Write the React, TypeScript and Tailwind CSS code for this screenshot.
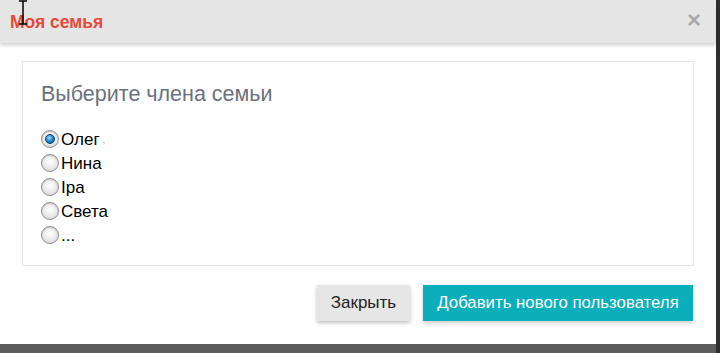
const members = ["Олег", "Нина", "Іра", "Света", "..."];

function Radio({ checked }: { checked: boolean }) {
  return (
    <span className="relative flex h-[18px] w-[18px] shrink-0 items-center justify-center rounded-full border border-[#8f8f8f] bg-[radial-gradient(circle_at_50%_40%,#ffffff_0%,#e8e8e8_55%,#cfcfcf_100%)] shadow-[inset_0_1px_1px_rgba(0,0,0,0.15)]">
      {checked && (
        <span className="h-[10px] w-[10px] rounded-full border border-[#0b3f6b] bg-[radial-gradient(circle_at_40%_35%,#9fdcff_0%,#2a8fd0_45%,#0a4b86_100%)]" />
      )}
    </span>
  );
}

export default function App() {
  return (
    <div className="relative flex h-[353px] w-[720px] overflow-hidden bg-[#5d5d5d] font-['Liberation_Sans',Arial,sans-serif]">
      <div className="flex h-[344px] w-[716px] flex-col bg-white">
        {/* Header */}
        <div className="relative z-10 flex h-[43px] items-center justify-between bg-[#e5e5e5] pl-[10px] pr-[15px] shadow-[0_2px_4px_rgba(0,0,0,0.2)]">
          <h4 className="pt-[2px] text-[17.5px] font-bold text-[#e7493a]">Моя семья</h4>
          <span className="pb-[4px] text-[24px] font-bold leading-none text-[#a9a9a9]">×</span>
        </div>

        {/* Body */}
        <div className="px-[22px] pt-[18px]">
          <div className="h-[205px] border border-[#e6e6e6] px-[18px] pt-[16px]">
            <h3 className="text-[21.5px] leading-[1.5] text-[#6b717e]">Выберите члена семьи</h3>
            <div className="mt-[17px] flex flex-col">
              {members.map((m, i) => (
                <label key={m} className="flex h-[24px] items-center text-[17px] text-black">
                  <Radio checked={i === 0} />
                  <span className="ml-[2px]">{m}</span>
                  {i === 0 && <span className="ml-[3px] text-[10px] text-[#c8a070]">,</span>}
                </label>
              ))}
            </div>
          </div>
        </div>

        {/* Footer */}
        <div className="flex justify-end gap-[13px] px-[23px] pt-[19px]">
          <button className="h-[36px] w-[93px] bg-[#e6e6e6] text-[17px] text-[#222] shadow-[0_2px_4px_rgba(0,0,0,0.25)]">
            Закрыть
          </button>
          <button className="h-[36px] w-[270px] bg-[#0bafbb] text-[16.8px] text-white shadow-[0_2px_4px_rgba(0,0,0,0.2)]">
            Добавить нового пользователя
          </button>
        </div>
      </div>
      <div className="h-full w-[4px] bg-[#2e2e2e]" />

      {/* text cursor */}
      <svg className="absolute left-[18px] top-0 z-20" width="10" height="26" viewBox="0 0 10 26">
        <path d="M1 1h8M5 1v23M1 24h8" stroke="#000" strokeWidth="1.5" fill="none" />
      </svg>
    </div>
  );
}
